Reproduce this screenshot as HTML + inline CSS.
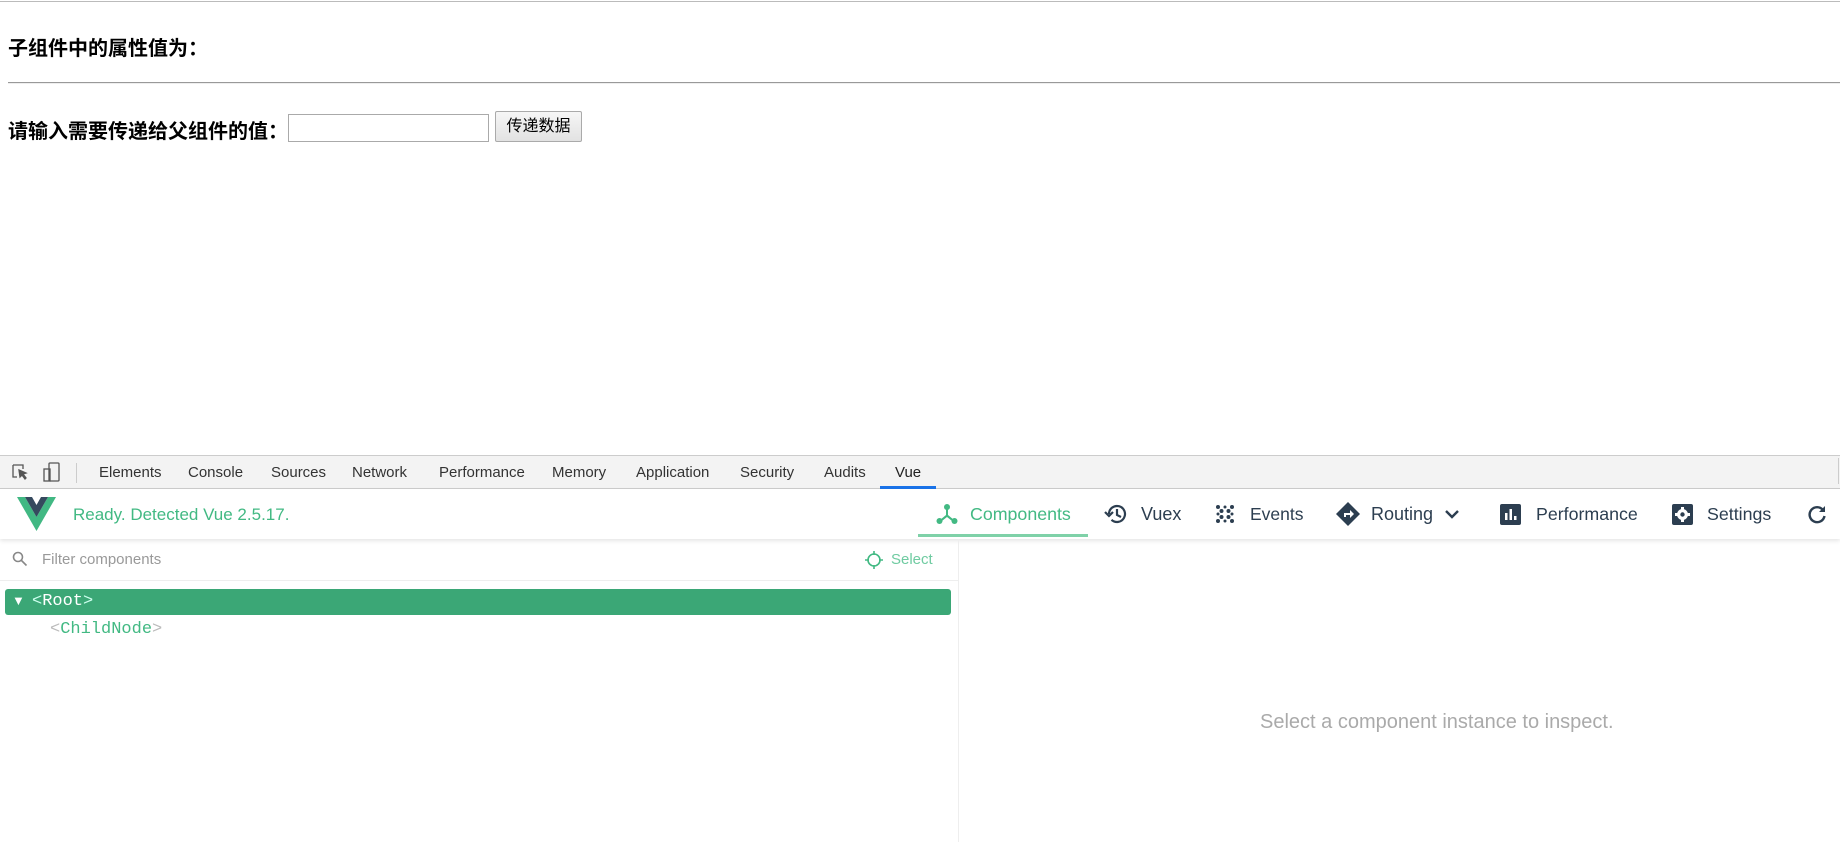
<!DOCTYPE html>
<html><head><meta charset="utf-8"><style>
*{margin:0;padding:0;box-sizing:border-box}
body{width:1840px;height:842px;position:relative;overflow:hidden;background:#fff;font-family:"Liberation Sans","Noto Sans CJK SC",sans-serif}
.a{position:absolute;white-space:nowrap}
.cn{font-weight:bold;font-size:20px;color:#000}
.tab{position:absolute;top:464px;font-size:15px;color:#333}
.nav{position:absolute;top:504px;font-size:18px;color:#2c3e50}
.ic{position:absolute}
</style></head><body>
<div class="a" style="left:0;top:1px;width:1840px;height:1px;background:#bbb"></div>
<div class="a cn" style="left:8px;top:32px">子组件中的属性值为：</div>
<div class="a" style="left:8px;top:82px;width:1832px;height:2px;border-top:1px solid #999;border-bottom:1px solid #eee"></div>
<div class="a cn" style="left:8px;top:115px">请输入需要传递给父组件的值：</div>
<div class="a" style="left:288px;top:114px;width:201px;height:28px;border:1px solid #aaa;background:#fff"></div>
<div class="a" style="left:495px;top:111px;width:87px;height:31px;border:1px solid #aaa;border-radius:2px;background:linear-gradient(#f6f6f6,#e2e2e2);font-size:16px;text-align:center;line-height:29px;color:#000">传递数据</div>

<div class="a" style="left:0;top:455px;width:1840px;height:34px;background:#f3f3f3;border-top:1px solid #ccc;border-bottom:1px solid #ccc"></div>
<svg class="ic" style="left:10px;top:462px" width="20" height="20" viewBox="0 0 20 20" fill="none" stroke="#555" stroke-width="1.3"><path d="M3 3h10v4M3 3v12h4"/><path d="M9 8l7 3-3 1 3 4-1 1-3-4-2 2z" fill="#555"/></svg>
<svg class="ic" style="left:42px;top:461px" width="20" height="22" viewBox="0 0 20 22" fill="none" stroke="#555" stroke-width="1.3"><rect x="7" y="2" width="10" height="18" rx="1"/><rect x="2" y="8" width="6" height="12"/></svg>
<div class="a" style="left:76px;top:463px;width:1px;height:20px;background:#ccc"></div>
<div class="tab" style="left:99px">Elements</div>
<div class="tab" style="left:188px">Console</div>
<div class="tab" style="left:271px">Sources</div>
<div class="tab" style="left:352px">Network</div>
<div class="tab" style="left:439px">Performance</div>
<div class="tab" style="left:552px">Memory</div>
<div class="tab" style="left:636px">Application</div>
<div class="tab" style="left:740px">Security</div>
<div class="tab" style="left:824px">Audits</div>
<div class="tab" style="left:895px;color:#222">Vue</div>
<div class="a" style="left:880px;top:486px;width:56px;height:3px;background:#1a73e8"></div>
<div class="a" style="left:1838px;top:458px;width:1px;height:26px;background:#ccc"></div>

<div class="a" style="left:0;top:489px;width:1840px;height:50px;background:#fff;box-shadow:0 2px 4px rgba(0,0,0,.1)"></div>
<svg class="ic" style="left:17px;top:497px" width="39" height="34" viewBox="0 0 39 34"><path d="M0 0h8l11.5 20L31 0h8L19.5 34z" fill="#41b883"/><path d="M8 0h7l4.5 8L24 0h7L19.5 20z" fill="#35495e"/></svg>
<div class="a" style="left:73px;top:505px;font-size:17px;color:#42b983">Ready. Detected Vue 2.5.17.</div>
<svg class="ic" style="left:936px;top:503px" width="22" height="22" viewBox="0 0 22 22" fill="#42b983"><circle cx="11" cy="4" r="3"/><circle cx="3.5" cy="18" r="3"/><circle cx="18.5" cy="18" r="3"/><path d="M10 5h2v7l6 5-1.3 1.5L11 14l-5.7 4.5L4 17l6-5z"/></svg>
<div class="nav" style="left:970px;color:#42b983;font-size:17.8px">Components</div>
<div class="a" style="left:918px;top:534px;width:170px;height:3px;background:#7fd1a8"></div>
<svg class="ic" style="left:1104px;top:503px" width="24" height="22" viewBox="0 0 24 22" fill="none" stroke="#2c3e50" stroke-width="2.2"><path d="M5 11a8 8 0 1 1 2.5 5.8"/><path d="M1 9l4 4 4-4" /><path d="M13 6v6l4 2"/></svg>
<div class="nav" style="left:1141px">Vuex</div>
<svg class="ic" style="left:1215px;top:504px" width="20" height="20" viewBox="0 0 20 20" fill="#2c3e50"><circle cx="3" cy="3" r="2"/><circle cx="10" cy="3" r="1.5"/><circle cx="17" cy="3" r="2"/><circle cx="6.5" cy="7" r="2"/><circle cx="13.5" cy="7" r="2"/><circle cx="3" cy="10" r="1.5"/><circle cx="17" cy="10" r="1.5"/><circle cx="6.5" cy="13" r="2"/><circle cx="13.5" cy="13" r="2"/><circle cx="3" cy="17" r="2"/><circle cx="10" cy="17" r="1.5"/><circle cx="17" cy="17" r="2"/></svg>
<div class="nav" style="left:1250px;font-size:17.5px">Events</div>
<svg class="ic" style="left:1336px;top:502px" width="24" height="24" viewBox="0 0 24 24"><path d="M12 0l12 12-12 12L0 12z" fill="#2c3e50"/><path d="M8 15v-4h6V8l4 4-4 4v-3h-4v2z" fill="#fff"/></svg>
<div class="nav" style="left:1371px">Routing</div>
<svg class="ic" style="left:1444px;top:509px" width="16" height="12" viewBox="0 0 16 12" fill="none" stroke="#2c3e50" stroke-width="2.4"><path d="M2 2l6 6 6-6"/></svg>
<svg class="ic" style="left:1500px;top:504px" width="21" height="21" viewBox="0 0 21 21"><rect width="21" height="21" rx="2" fill="#2c3e50"/><path d="M5 9h2.5v7H5zM9.5 5H12v11H9.5zM14 12h2.5v4H14z" fill="#fff"/></svg>
<div class="nav" style="left:1536px;font-size:17.8px">Performance</div>
<svg class="ic" style="left:1672px;top:504px" width="21" height="21" viewBox="0 0 21 21"><rect width="21" height="21" rx="2" fill="#2c3e50"/><circle cx="10.5" cy="10.5" r="5.5" fill="#fff"/><circle cx="10.5" cy="10.5" r="2.2" fill="#2c3e50"/><path d="M9 3h3v3H9zM9 15h3v3H9zM3 9h3v3H3zM15 9h3v3h-3z" fill="#fff"/></svg>
<div class="nav" style="left:1707px;font-size:17.8px">Settings</div>
<svg class="ic" style="left:1806px;top:504px" width="22" height="22" viewBox="0 0 22 22" fill="none" stroke="#2c3e50" stroke-width="2.4"><path d="M17 6a7.5 7.5 0 1 0 1.5 6"/><path d="M19 2v6h-6z" fill="#2c3e50" stroke="none"/></svg>

<svg class="ic" style="left:12px;top:551px" width="16" height="16" viewBox="0 0 16 16" fill="none" stroke="#888" stroke-width="1.6"><circle cx="6" cy="6" r="4.5"/><path d="M9.5 9.5l5 5"/></svg>
<div class="a" style="left:42px;top:551px;font-size:15px;color:#999">Filter components</div>
<svg class="ic" style="left:864px;top:550px" width="20" height="20" viewBox="0 0 20 20" fill="none" stroke="#42b983" stroke-width="1.6"><circle cx="10" cy="10" r="6"/><path d="M10 1v4M10 15v4M1 10h4M15 10h4"/></svg>
<div class="a" style="left:891px;top:551px;font-size:15px;color:#6fcba1">Select</div>
<div class="a" style="left:0;top:580px;width:958px;height:1px;background:#eee"></div>
<div class="a" style="left:5px;top:589px;width:946px;height:26px;background:#3ba776;border-radius:3px"></div>
<div class="a" style="left:12px;top:593px;font-size:13px;color:#fff">▼</div>
<div class="a" style="left:32px;top:592px;font-size:17px;font-family:'Liberation Mono',monospace;color:#fff"><span style="color:#cfe">&lt;</span>Root<span style="color:#cfe">&gt;</span></div>
<div class="a" style="left:50px;top:620px;font-size:17px;font-family:'Liberation Mono',monospace;color:#42b983"><span style="color:#bbb">&lt;</span>ChildNode<span style="color:#bbb">&gt;</span></div>
<div class="a" style="left:958px;top:539px;width:1px;height:303px;background:#eee"></div>
<div class="a" style="left:1260px;top:711px;font-size:20px;color:#aaa">Select a component instance to inspect.</div>
</body></html>
